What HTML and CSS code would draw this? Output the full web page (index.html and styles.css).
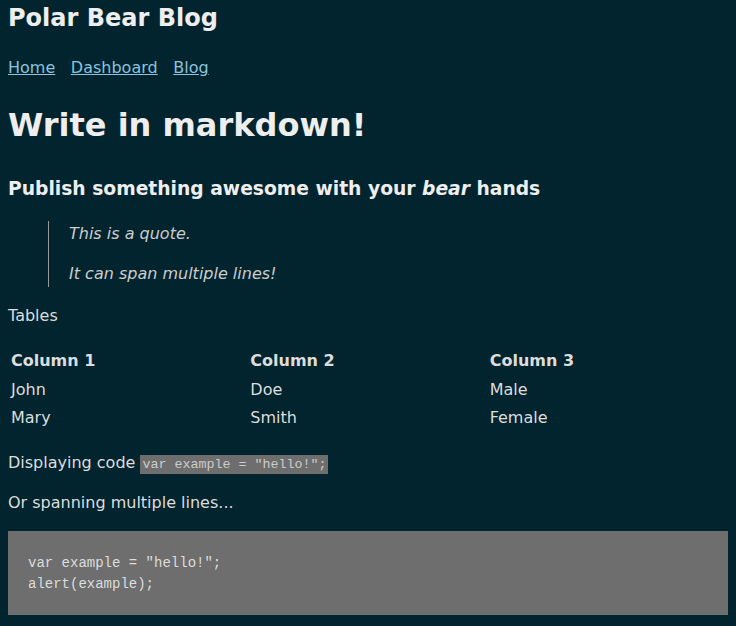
FILE: index.html
```
<!DOCTYPE html>
<html lang="en">
<head>
<meta charset="utf-8">
<title>Polar Bear Blog</title>
<link rel="stylesheet" href="styles.css">
</head>
<body>
<header>
  <a href="/" class="title"><h2>Polar Bear Blog</h2></a>
  <nav><p><a href="/">Home</a> <a href="/dashboard/">Dashboard</a> <a href="/blog/">Blog</a></p></nav>
</header>
<main>
  <h1>Write in markdown!</h1>
  <h3>Publish something awesome with your <em>bear</em> hands</h3>
  <blockquote>
    <p>This is a quote.</p>
    <p>It can span multiple lines!</p>
  </blockquote>
  <p>Tables</p>
  <table>
    <thead>
      <tr><th>Column 1</th><th>Column 2</th><th>Column 3</th></tr>
    </thead>
    <tbody>
      <tr><td>John</td><td>Doe</td><td>Male</td></tr>
      <tr><td>Mary</td><td>Smith</td><td>Female</td></tr>
    </tbody>
  </table>
  <p class="code-line">Displaying code <code>var example = "hello!";</code></p>
  <p>Or spanning multiple lines...</p>
  <pre><code>var example = "hello!";
alert(example);</code></pre>
</main>
</body>
</html>
```
FILE: styles.css
```
html {
  background-color: #01242e;
}
body {
  font-family: "DejaVu Sans", Verdana, sans-serif;
  margin: 0;
  padding: 0 8px 8px;
  background-color: #01242e;
  color: #ddd;
  line-height: 1.5;
  text-align: left;
}
h1, h2, h3, strong, b {
  color: #eee;
}
.title {
  text-decoration: none;
}
.title h2 {
  font-size: 24px;
  margin: 0 0 0.83em;
}
nav p {
  margin: 0 0 16px;
}
a {
  color: #8cc2dd;
}
nav a {
  margin-right: 10.5px;
}
h1 {
  font-size: 32px;
  margin: 21px 0 26px;
}
h3 {
  font-size: 18.72px;
  margin: 0 0 18px;
}
blockquote {
  border-left: 1px solid #999;
  color: #ccc;
  padding: 1px 0 1px 20px;
  font-style: italic;
  margin: 0 0 17px 40px;
}
blockquote p {
  margin: 0 0 16px;
}
blockquote p:last-child {
  margin-bottom: 0;
}
table {
  width: 100%;
  margin-top: 18px;
}
th, td {
  line-height: 24.65px;
}
th {
  text-align: left;
}
p {
  margin: 16px 0;
}
.code-line {
  line-height: 25px;
}
code {
  font-family: "Liberation Mono", monospace;
  font-size: 13.33px;
  line-height: 1;
  padding: 2px;
  background-color: #6e6e6e;
  color: #ccc;
}
pre {
  margin: 15px 0 0;
}
pre code {
  display: block;
  padding: 22px 20px 20px;
  white-space: pre-wrap;
  font-size: 14px;
  line-height: 21px;
  color: #ddd;
}
```
